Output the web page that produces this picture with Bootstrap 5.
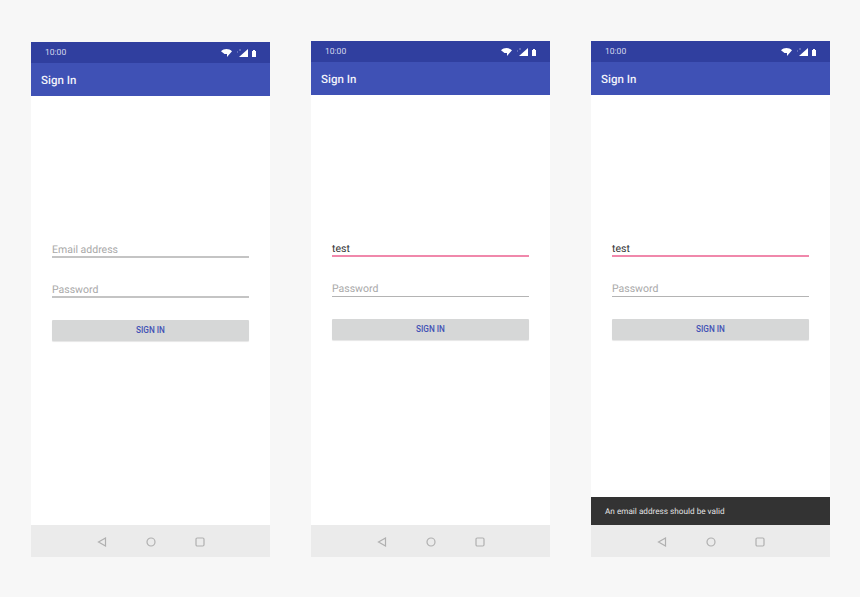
<!DOCTYPE html>
<html lang="en">
<head>
  <meta charset="UTF-8">
  <meta name="viewport" content="width=device-width, initial-scale=1.0">
  <title>Sign In screens</title>
  <link href="https://cdn.jsdelivr.net/npm/bootstrap@5.3.0/dist/css/bootstrap.min.css" rel="stylesheet">
  <style>
    body { background-color: #f7f7f7; font-family: Roboto, "Liberation Sans", sans-serif; text-rendering: geometricPrecision; }
    .screens { padding: 41px 0 0 31px; gap: 41px; }
    .phone { width: 239px; height: 516px; background-color: #fff; }
    .phone-first { height: 515px; margin-top: 1px; }
    .status-strip { height: 21px; background-color: #303f9f; color: #d5d8ee; font-size: 8.5px; padding: 1px 14px 0; }
    .status-time { line-height: 21px; }
    .app-strip { height: 33px; background-color: #3f51b5; color: #f1f2fa; font-size: 11.5px; font-weight: 500; padding: 0 10px; line-height: 34px; }
    .screen-body { min-height: 0; }
    .sign-form { padding: 146px 21px 0; }
    .phone-input { border: 0; border-bottom: 2px solid #c4c4c4; border-radius: 0; background: transparent; padding: 1px 0 0; height: 16px; line-height: 14px; font-size: 10.5px; color: #a8a8a8; }
    .phone-input + .phone-input { margin-top: 24px; }
    .phone-input.filled { color: #333; border-bottom-color: #f088ab; }
    .phone-input.thin-line { border-bottom: 1px solid #b4b4b4; }
    .phone-btn { display: block; width: 100%; height: 21px; margin-top: 22px; padding: 0; border: 0; border-radius: 1px; background-color: #d6d7d7; color: #3f51b5; font-size: 8.2px; font-weight: 500; line-height: 21px; box-shadow: 0 1px 1px rgba(0, 0, 0, .1); }
    .snack-bar { height: 28px; background-color: #333; color: #e2e2e2; font-size: 8.2px; line-height: 30px; padding: 0 14px; }
    .nav-strip { height: 32px; background-color: #ebebeb; gap: 39px; padding-top: 1px; }
    .nav-strip svg { display: block; }
    .status-icons { gap: 4px; }
  </style>
</head>
<body>
  <div class="screens d-flex align-items-start">

    <div class="phone phone-first d-flex flex-column">
      <div class="status-strip d-flex justify-content-between align-items-center">
        <span class="status-time">10:00</span>
        <span class="status-icons d-flex align-items-center">
          <svg width="11" height="8" viewBox="0 0 11 8"><path d="M0 2.2C3-.7 8-.7 11 2.2L6 8V5H3.500z" fill="#fff"/></svg>
          <svg width="12" height="8" viewBox="0 0 12 8"><path d="M12 0v8H3z" fill="#fff"/><path d="M3 1h2M1 3h1" stroke="#8f98cf" stroke-width="1"/></svg>
          <svg width="4" height="7" viewBox="0 0 4 7"><path d="M0 1h1V0h2v1h1v6H0z" fill="#fff"/></svg>
        </span>
      </div>
      <div class="app-strip">Sign In</div>
      <div class="screen-body flex-grow-1 d-flex flex-column">
        <form class="sign-form">
          <div class="form-control phone-input">Email address</div>
          <div class="form-control phone-input">Password</div>
          <button type="button" class="btn phone-btn">SIGN IN</button>
        </form>
      </div>
      <div class="nav-strip d-flex justify-content-center align-items-center">
        <svg width="10" height="10" viewBox="0 0 10 10"><path d="M8.500 1v8L1.500 5z" fill="none" stroke="#b0b0b0" stroke-width="1.200"/></svg>
        <svg width="10" height="10" viewBox="0 0 10 10"><circle cx="5" cy="5" r="4" fill="none" stroke="#b0b0b0" stroke-width="1.200"/></svg>
        <svg width="10" height="10" viewBox="0 0 10 10"><rect x="1" y="1" width="8" height="8" rx="1.200" fill="none" stroke="#b0b0b0" stroke-width="1.200"/></svg>
      </div>
    </div>

    <div class="phone d-flex flex-column">
      <div class="status-strip d-flex justify-content-between align-items-center">
        <span class="status-time">10:00</span>
        <span class="status-icons d-flex align-items-center">
          <svg width="11" height="8" viewBox="0 0 11 8"><path d="M0 2.2C3-.7 8-.7 11 2.2L6 8V5H3.500z" fill="#fff"/></svg>
          <svg width="12" height="8" viewBox="0 0 12 8"><path d="M12 0v8H3z" fill="#fff"/><path d="M3 1h2M1 3h1" stroke="#8f98cf" stroke-width="1"/></svg>
          <svg width="4" height="7" viewBox="0 0 4 7"><path d="M0 1h1V0h2v1h1v6H0z" fill="#fff"/></svg>
        </span>
      </div>
      <div class="app-strip">Sign In</div>
      <div class="screen-body flex-grow-1 d-flex flex-column">
        <form class="sign-form">
          <div class="form-control phone-input filled">test</div>
          <div class="form-control phone-input thin-line">Password</div>
          <button type="button" class="btn phone-btn">SIGN IN</button>
        </form>
      </div>
      <div class="nav-strip d-flex justify-content-center align-items-center">
        <svg width="10" height="10" viewBox="0 0 10 10"><path d="M8.500 1v8L1.500 5z" fill="none" stroke="#b0b0b0" stroke-width="1.200"/></svg>
        <svg width="10" height="10" viewBox="0 0 10 10"><circle cx="5" cy="5" r="4" fill="none" stroke="#b0b0b0" stroke-width="1.200"/></svg>
        <svg width="10" height="10" viewBox="0 0 10 10"><rect x="1" y="1" width="8" height="8" rx="1.200" fill="none" stroke="#b0b0b0" stroke-width="1.200"/></svg>
      </div>
    </div>

    <div class="phone d-flex flex-column">
      <div class="status-strip d-flex justify-content-between align-items-center">
        <span class="status-time">10:00</span>
        <span class="status-icons d-flex align-items-center">
          <svg width="11" height="8" viewBox="0 0 11 8"><path d="M0 2.2C3-.7 8-.7 11 2.2L6 8V5H3.500z" fill="#fff"/></svg>
          <svg width="12" height="8" viewBox="0 0 12 8"><path d="M12 0v8H3z" fill="#fff"/><path d="M3 1h2M1 3h1" stroke="#8f98cf" stroke-width="1"/></svg>
          <svg width="4" height="7" viewBox="0 0 4 7"><path d="M0 1h1V0h2v1h1v6H0z" fill="#fff"/></svg>
        </span>
      </div>
      <div class="app-strip">Sign In</div>
      <div class="screen-body flex-grow-1 d-flex flex-column">
        <form class="sign-form">
          <div class="form-control phone-input filled">test</div>
          <div class="form-control phone-input thin-line">Password</div>
          <button type="button" class="btn phone-btn">SIGN IN</button>
        </form>
        <div class="snack-bar mt-auto">An email address should be valid</div>
      </div>
      <div class="nav-strip d-flex justify-content-center align-items-center">
        <svg width="10" height="10" viewBox="0 0 10 10"><path d="M8.500 1v8L1.500 5z" fill="none" stroke="#b0b0b0" stroke-width="1.200"/></svg>
        <svg width="10" height="10" viewBox="0 0 10 10"><circle cx="5" cy="5" r="4" fill="none" stroke="#b0b0b0" stroke-width="1.200"/></svg>
        <svg width="10" height="10" viewBox="0 0 10 10"><rect x="1" y="1" width="8" height="8" rx="1.200" fill="none" stroke="#b0b0b0" stroke-width="1.200"/></svg>
      </div>
    </div>

  </div>
  <script src="https://cdn.jsdelivr.net/npm/bootstrap@5.3.0/dist/js/bootstrap.bundle.min.js"></script>
</body>
</html>
